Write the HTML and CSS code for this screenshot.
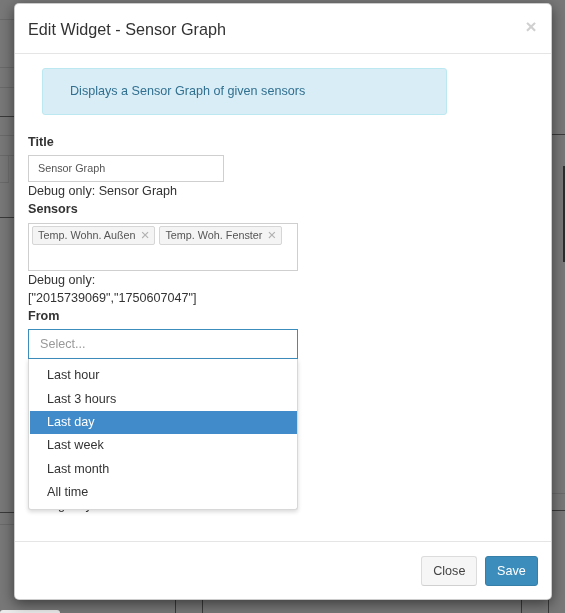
FILE: index.html
```html
<!DOCTYPE html>
<html lang="de">
<head>
<meta charset="utf-8">
<title>Edit Widget - Sensor Graph</title>
<link rel="stylesheet" href="styles.css">
</head>
<body>
<div class="page">
  <div class="page-top">
    <div class="col-left">
      <div class="bg-row r1"></div>
      <div class="bg-row r2"></div>
      <div class="bg-row r3"></div>
      <div class="bg-row r4 dark"></div>
      <div class="bg-row r5"></div>
      <div class="bg-row r6"></div>
      <div class="bg-row r7 split"></div>
      <div class="bg-row r8 dark"></div>
      <div class="bg-row r9 dark"></div>
      <div class="bg-row r10"></div>
    </div>
    <div class="col-mid"></div>
    <div class="col-right">
      <div class="bg-row q1 dark"></div>
      <div class="bg-row q2"></div>
      <div class="bg-row q3"><div class="dark-bar"></div></div>
      <div class="bg-row q4"></div>
      <div class="bg-row q5 dark"></div>
    </div>
  </div>
  <div class="page-bottom">
    <div class="cell c1"><div class="tab"></div></div>
    <div class="cell c2"></div>
    <div class="cell c3"></div>
    <div class="cell c4"></div>
  </div>
</div>

<div class="modal">
  <div class="modal-header">
    <h4 class="modal-title">Edit Widget - Sensor Graph</h4>
    <span class="close">×</span>
  </div>
  <div class="modal-body">
    <div class="alert">Displays a Sensor Graph of given sensors</div>

    <div class="group">
      <label class="label">Title</label>
      <div class="input-sm">Sensor Graph</div>
      <div class="debug">Debug only: Sensor Graph</div>
    </div>

    <div class="group">
      <label class="label">Sensors</label>
      <div class="multi">
        <span class="tag">Temp. Wohn. Außen<span class="tag-x">×</span></span>
        <span class="tag">Temp. Woh. Fenster<span class="tag-x">×</span></span>
      </div>
      <div class="debug">Debug only:</div>
      <div class="debug">["2015739069","1750607047"]</div>
    </div>

    <div class="group">
      <label class="label">From</label>
      <div class="select-wrap">
        <div class="select">Select...</div>
        <ul class="menu">
          <li class="option">Last hour</li>
          <li class="option">Last 3 hours</li>
          <li class="option active">Last day</li>
          <li class="option">Last week</li>
          <li class="option">Last month</li>
          <li class="option">All time</li>
        </ul>
      </div>
      <div class="hidden-area"></div>
      <div class="debug last">Debug only:</div>
    </div>
  </div>
  <div class="modal-footer">
    <button class="btn btn-default">Close</button>
    <button class="btn btn-primary">Save</button>
  </div>
</div>
</body>
</html>
```

FILE: styles.css
```css
html, body {
  margin: 0;
  padding: 0;
}
body {
  width: 565px;
  height: 613px;
  overflow: hidden;
  background: #787878;
  font-family: "Liberation Sans", Arial, sans-serif;
  font-size: 12.6px;
  line-height: 18px;
  color: #333;
}

/* background page (darkened behind the modal) */
.page-top {
  display: grid;
  grid-template-columns: 14px 1fr 13px;
  height: 600px;
}
.bg-row {
  box-sizing: border-box;
  border-bottom: 1px solid #6a6a6a;
}
.bg-row.dark { border-bottom-color: #3a3a3a; }
.r1 { height: 20px; }
.r2 { height: 48px; }
.r3 { height: 20px; }
.r4 { height: 29px; }
.r5 { height: 19px; }
.r6 { height: 20px; }
.r7 { height: 27px; }
.r8 { height: 35px; }
.r9 { height: 295px; }
.r10 { height: 12px; }
.split { border-right: 1px solid #6e6e6e; width: 9px; }
.q1 { height: 135px; }
.q2 { height: 31px; border-bottom: none; }
.q3 { height: 96px; border-bottom: none; display: flex; justify-content: flex-end; }
.dark-bar { width: 2px; background: #2c2c2c; }
.q4 { height: 232px; }
.q5 { height: 17px; }

.page-bottom {
  display: flex;
  height: 13px;
}
.cell {
  box-sizing: border-box;
  border-right: 1px solid #3a3a3a;
}
.c1 { width: 176px; }
.c2 { width: 27px; }
.c3 { width: 319px; }
.c4 { width: 27px; }
.tab {
  margin-top: 10px;
  width: 60px;
  height: 3px;
  background: #ececec;
  border-radius: 4px 4px 0 0;
}

/* modal */
.modal {
  position: fixed;
  top: 3px;
  left: 14px;
  width: 538px;
  box-sizing: border-box;
  background: #fff;
  border: 1px solid rgba(0,0,0,.2);
  border-radius: 5px;
  box-shadow: 0 4px 14px rgba(0,0,0,.5);
}
.modal-header {
  display: flex;
  justify-content: space-between;
  align-items: flex-start;
  padding: 13.5px 13.5px 13.5px 13px;
  border-bottom: 1px solid #e5e5e5;
}
.modal-title {
  margin: 0;
  font-size: 16.2px;
  font-weight: 400;
  line-height: 22px;
  color: #333;
}
.close {
  font-size: 19px;
  font-weight: 700;
  line-height: 19px;
  color: #d0d0d0;
  margin-top: -1px;
  margin-right: 1px;
}

.modal-body {
  padding: 13.5px 13.5px 13.5px 13px;
}
.alert {
  box-sizing: border-box;
  width: 405px;
  margin: 0 0 18px 14px;
  padding: 13.5px 27px;
  border: 1px solid #bce8f1;
  border-radius: 3px;
  background: #d9edf7;
  color: #31708f;
}

.label {
  display: block;
  font-weight: 700;
  margin-bottom: 4.5px;
  color: #333;
}
.input-sm {
  box-sizing: border-box;
  width: 196px;
  height: 27px;
  border: 1px solid #cfcfcf;
  padding: 0 9px;
  font-size: 10.8px;
  line-height: 25px;
  color: #555;
}
.debug {
  color: #333;
}

.multi {
  box-sizing: border-box;
  width: 270px;
  height: 48px;
  border: 1px solid #cfcfcf;
  padding: 2px 3px;
  display: flex;
  align-items: flex-start;
  gap: 4px;
}
.tag {
  display: inline-flex;
  align-items: center;
  box-sizing: border-box;
  height: 19px;
  padding: 0 5px 0 5px;
  border: 1px solid #d6d6d6;
  border-radius: 2px;
  background: #f4f4f4;
  font-size: 10.8px;
  color: #555;
}
.tag-x {
  margin-left: 5px;
  font-size: 15px;
  line-height: 15px;
  color: #b0b0b0;
  margin-top: -2px;
}

.select-wrap {
  position: relative;
}
.select {
  box-sizing: border-box;
  width: 270px;
  height: 30px;
  border: 1px solid #3c8dbc;
  padding-left: 11px;
  line-height: 28px;
  color: #999;
}
.menu {
  position: absolute;
  top: 100%;
  left: 0;
  z-index: 5;
  box-sizing: border-box;
  width: 270px;
  margin: 0;
  padding: 5.2px 0 4.4px;
  list-style: none;
  background: #fff;
  border: 1px solid #d8d8d8;
  border-top: none;
  border-radius: 0 0 3px 3px;
  box-shadow: 0 2px 4px rgba(0,0,0,.15);
}
.option {
  height: 23.4px;
  line-height: 23.4px;
  margin-left: 1px;
  padding-left: 17px;
  color: #333;
}
.option.active {
  background: #428bca;
  color: #fff;
}
.hidden-area {
  height: 137px;
}
.debug.last {
  margin-bottom: 13.5px;
}

.modal-footer {
  display: flex;
  justify-content: flex-end;
  gap: 8px;
  padding: 13.5px;
  border-top: 1px solid #e5e5e5;
}
.btn {
  box-sizing: border-box;
  height: 30px;
  padding: 0 10.8px;
  font-family: "Liberation Sans", Arial, sans-serif;
  font-size: 12.6px;
  line-height: 28px;
  border-radius: 3px;
  border: 1px solid transparent;
}
.btn-default {
  background: #f6f6f6;
  border-color: #dcdcdc;
  border-bottom-color: #d0d0d0;
  color: #444;
}
.btn-primary {
  background: #3c8dbc;
  border-color: #367fa9;
  color: #fff;
}
```
